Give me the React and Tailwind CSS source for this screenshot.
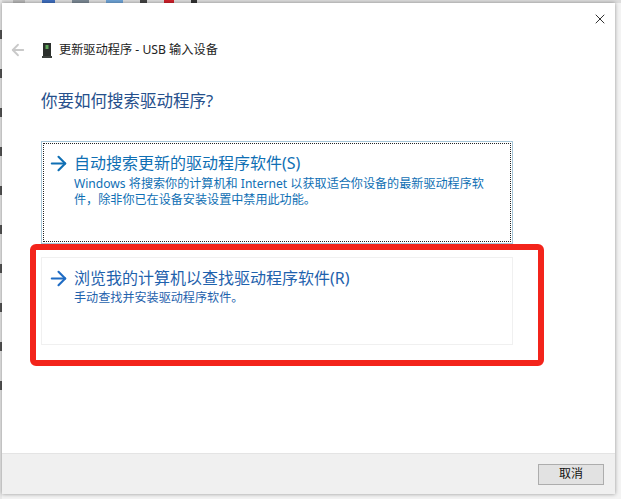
import { FiArrowLeft, FiArrowRight, FiX } from 'react-icons/fi'

const font = { fontFamily: '"Noto Sans", "Noto Sans CJK SC", sans-serif' }

// bits of the desktop that stick out at the window's top and left edge
const topBits = [
  { w: 'w-[12px]', cls: 'bg-[#b9b9b9]' },
  { w: 'w-[13px]', cls: 'bg-[#3f6fc0]' },
  { w: 'w-[17px]', cls: 'bg-[#7d8a96]' },
  { w: 'w-[17px]', cls: 'bg-[#6fa5d8]' },
  { w: 'w-[7px]', cls: 'bg-[#444444]' },
  { w: 'w-[10px]', cls: 'bg-[#d0202a]' },
  { w: 'w-[6px]', cls: 'bg-[#333333]' },
]

const leftBits = [60, 135, 150, 205, 260, 345, 375, 395, 410, 430]

function DeviceIcon() {
  return (
    <svg width="10" height="15" viewBox="0 0 10 15" className="shrink-0">
      <rect x="1" y="0" width="8" height="13" fill="#2b2f2c" />
      <rect x="3.5" y="2" width="3" height="4" fill="#5fa85a" />
      <rect x="0" y="13" width="10" height="2" fill="#3c403d" />
    </svg>
  )
}

function Option({ title, lines, boxCls, color, arrowCls, descTop }) {
  return (
    <div className={boxCls}>
      <div className="flex items-center gap-[4px] h-[24px]">
        <FiArrowRight size={23} strokeWidth={2.2} className={`shrink-0 -ml-[4px] ${arrowCls}`} />
        <span className={`text-[16px] leading-[22px] ${color}`}>{title}</span>
      </div>
      <div className={`pl-[23px] text-[12.1px] leading-[16px] ${descTop} ${color}`}>
        {lines.map(l => <div key={l} className="whitespace-nowrap">{l}</div>)}
      </div>
    </div>
  )
}

export default function App() {
  return (
    <div className="relative w-[621px] h-[499px] overflow-hidden bg-[#f3f3f3]" style={font}>
      <div className="absolute left-0 top-0 w-full h-[3px] bg-[#dddddd] flex pl-[13px] gap-[17px]">
        {topBits.map(b => <div key={b.cls} className={`${b.w} ${b.cls}`} />)}
      </div>
      <div className="absolute left-0 top-0 h-full w-[2px] bg-[#e8e8e8]">
        {leftBits.map(y => <div key={y} className="h-[9px] w-[2px] bg-[#555555] mt-[30px]" />)}
      </div>

      <div className="absolute left-[2px] top-[3px] w-[613px] h-[491px] flex flex-col bg-white shadow-[0_0_4px_rgba(0,0,0,0.4)]">
        <div className="flex justify-end pt-[8px] pr-[7px] h-[29px]">
          <FiX size={16} strokeWidth={1.4} className="text-[#222222]" />
        </div>

        <div className="flex items-center pl-[7px] h-[34px] mt-[1px]">
          <FiArrowLeft size={18} strokeWidth={2.4} className="text-[#c9c9c9]" />
          <div className="ml-[15px]"><DeviceIcon /></div>
          <span className="ml-[7px] text-[12.2px] text-[#222222] whitespace-nowrap">更新驱动程序 - USB 输入设备</span>
        </div>

        <h1 className="ml-[39px] mt-[20px] text-[16.5px] leading-[28px] font-normal text-[#26508c] whitespace-nowrap">你要如何搜索驱动程序?</h1>

        <div className="ml-[39px] mt-[26px] w-[472px] flex flex-col gap-[13px]">
          <Option
            boxCls="h-[103px] border border-[#a5c6d8] px-[9px] pt-[9px] outline-dotted outline-1 -outline-offset-3 outline-[#222222]"
            title="自动搜索更新的驱动程序软件(S)"
            color="text-[#0f6fb4]"
            arrowCls="text-[#0f6fb4]"
            descTop="mt-[1px]"
            lines={['Windows 将搜索你的计算机和 Internet 以获取适合你设备的最新驱动程序软', '件，除非你已在设备安装设置中禁用此功能。']}
          />
          <Option
            boxCls="h-[88px] border border-[#f0f0f0] px-[9px] pt-[8px]"
            title="浏览我的计算机以查找驱动程序软件(R)"
            color="text-[#1f62ad]"
            arrowCls="text-[#1f6cc4]"
            descTop="mt-[0px]"
            lines={['手动查找并安装驱动程序软件。']}
          />
        </div>

        <div className="mt-auto h-[41px] bg-[#f0f0f0] border-t border-[#e4e4e4] flex items-center justify-end pr-[11px]">
          <button className="w-[66px] h-[21px] bg-[#e2e2e2] border border-[#adadad] text-[12px] leading-none text-[#111111]">取消</button>
        </div>
      </div>

      {/* red annotation drawn over the dialog */}
      <div className="absolute left-[30px] top-[244px] w-[514px] h-[122px] border-[6px] border-[#f3241b] rounded-[6px]" />
    </div>
  )
}
